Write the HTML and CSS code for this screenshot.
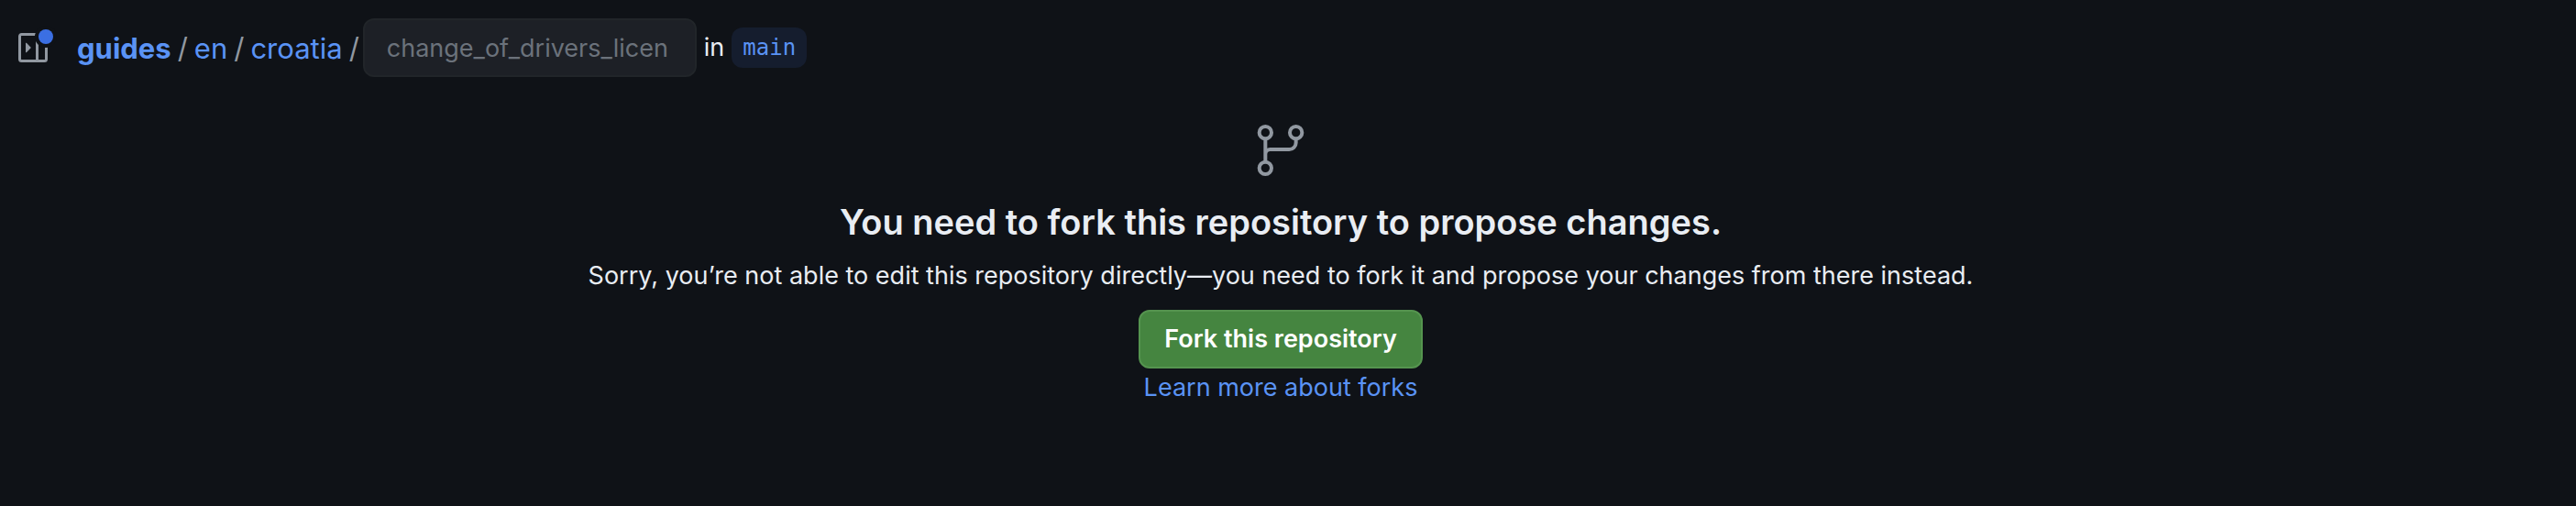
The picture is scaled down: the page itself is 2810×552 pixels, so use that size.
FILE: index.html
```html
<!DOCTYPE html>
<html lang="en">
<head>
<meta charset="utf-8">
<title>Fork this repository</title>
<link rel="stylesheet" href="styles.css">
</head>
<body>
<header class="file-header">
  <button class="tree-toggle" type="button" aria-label="Expand file tree">
    <svg class="tree-icon" viewBox="0 0 16 16" aria-hidden="true"><path d="M6.823 7.823a.25.25 0 0 1 0 .354l-2.396 2.396A.25.25 0 0 1 4 10.396V5.604a.25.25 0 0 1 .427-.177Z"/><path d="M1.75 0h12.5C15.216 0 16 .784 16 1.75v12.5A1.75 1.75 0 0 1 14.25 16H1.75A1.75 1.75 0 0 1 0 14.25V1.75C0 .784.784 0 1.75 0ZM1.5 1.75v12.5c0 .138.112.25.25.25H9.5v-13H1.75a.25.25 0 0 0-.25.25ZM11 14.5h3.25a.25.25 0 0 0 .25-.25V1.75a.25.25 0 0 0-.25-.25H11Z"/></svg>
    <span class="tree-dot"></span>
  </button>
  <nav class="crumbs" aria-label="Breadcrumb">
    <a class="crumb crumb-root" href="#">guides</a>
    <span class="slash">/</span>
    <a class="crumb" href="#">en</a>
    <span class="slash">/</span>
    <a class="crumb" href="#">croatia</a>
    <span class="slash">/</span>
  </nav>
  <input class="file-name" type="text" aria-label="File name" placeholder="change_of_drivers_license.md" disabled>
  <span class="in">in</span>
  <a class="branch" href="#">main</a>
</header>
<main class="blank">
  <svg class="branch-icon" viewBox="0 0 24 24" aria-hidden="true"><circle cx="5.75" cy="4.75" r="2.5"/><circle cx="18.25" cy="4.75" r="2.5"/><circle cx="5.75" cy="19.25" r="2.5"/><path d="M5.75 7.25v9.5M5.75 13.5a2 2 0 0 1 2-1.85H15.5a2.75 2.75 0 0 0 2.75-2.75V7.25"/></svg>
  <h1 class="title">You need to fork this repository to propose changes.</h1>
  <p class="text">Sorry, you’re not able to edit this repository directly—you need to fork it and propose your changes from there instead.</p>
  <button class="fork" type="button">Fork this repository</button>
  <a class="learn" href="#">Learn more about forks</a>
</main>
</body>
</html>
```
FILE: styles.css
```css
* { box-sizing: border-box; }

body {
  margin: 0;
  min-height: 100vh;
  background: #0f1217;
  color: #e9edf3;
  font-family: Inter, "Liberation Sans", sans-serif;
  font-size: 27px;
  line-height: 42px;
}

a { color: #5a93f5; text-decoration: none; }

.file-header {
  display: flex;
  align-items: center;
  padding: 20px 16px 0 20px;
}

.tree-toggle {
  position: relative;
  display: flex;
  margin-right: 32px;
  padding: 0;
  border: 0;
  background: none;
}

.tree-icon { width: 32px; height: 32px; fill: #9198a1; }

.tree-dot {
  position: absolute;
  top: -4px;
  right: -6px;
  width: 16px;
  height: 16px;
  border-radius: 50%;
  background: #3b6fe3;
  box-shadow: 0 0 0 4px #0f1217;
}

.crumbs {
  display: flex;
  align-items: center;
  gap: 7px;
  margin-right: 4px;
  padding-top: 2px;
  font-size: 31px;
}

.crumb-root { font-weight: 700; }
.slash { color: #9198a1; }

.file-name {
  width: 364px;
  height: 64px;
  padding: 0 28px 0 24px;
  border: 2px solid #212529;
  border-radius: 12px;
  background: #1d2026;
  font: inherit;
}

.file-name::placeholder { color: #6b727b; opacity: 1; }

.in { margin: 0 8px; }

.branch {
  padding: 1px 12px;
  border-radius: 12px;
  background: #151d2e;
  font-family: "DejaVu Sans Mono", monospace;
  font-size: 24px;
}

.blank {
  display: flex;
  flex-direction: column;
  align-items: center;
  padding: 48px 16px 48px 0;
}

.branch-icon {
  width: 64px;
  height: 64px;
  fill: none;
  stroke: #9198a1;
  stroke-width: 1.5;
}

.title {
  margin: 16px 0 8px;
  font-size: 38px;
  font-weight: 600;
  line-height: 60px;
}

.text { margin: 0 0 16px; }

.fork {
  height: 64px;
  padding: 0 26px;
  border: 2px solid #55944f;
  border-radius: 12px;
  background: #458540;
  color: #ffffff;
  font: inherit;
  font-weight: 600;
}
```
